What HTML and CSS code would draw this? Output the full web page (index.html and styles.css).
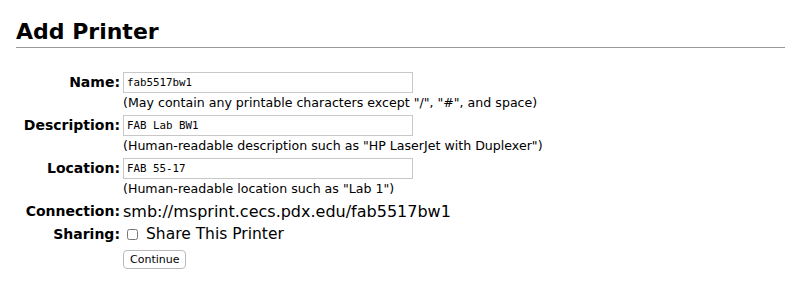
FILE: index.html
```html
<!DOCTYPE html>
<html lang="en">
<head>
    <meta charset="UTF-8">
    <link rel="stylesheet" href="styles.css">
    <title>Add Printer</title>
</head>
<body>
    <h2 class="title">Add Printer</h2>

    <form class="printer-form">
        <label class="label" for="name">Name:</label>
        <div class="field">
            <input type="text" id="name" class="text-input" value="fab5517bw1">
            <div class="help">(May contain any printable characters except "/", "#", and space)</div>
        </div>

        <label class="label" for="desc">Description:</label>
        <div class="field">
            <input type="text" id="desc" class="text-input" value="FAB Lab BW1">
            <div class="help">(Human-readable description such as "HP LaserJet with Duplexer")</div>
        </div>

        <label class="label" for="loc">Location:</label>
        <div class="field">
            <input type="text" id="loc" class="text-input" value="FAB 55-17">
            <div class="help">(Human-readable location such as "Lab 1")</div>
        </div>

        <div class="label">Connection:</div>
        <div class="value">smb://msprint.cecs.pdx.edu/fab5517bw1</div>

        <div class="label">Sharing:</div>
        <div class="value"><label class="share"><input type="checkbox" class="check"> Share This Printer</label></div>

        <div></div>
        <div class="actions"><button type="button" class="button">Continue</button></div>
    </form>
</body>
</html>
```

FILE: styles.css
```css
body {
    margin: 0;
    font-family: "DejaVu Sans", Verdana, sans-serif;
    color: #000;
    background: #fff;
}

.title {
    margin: 19px 0 0 16px;
    padding-bottom: 2px;
    font-size: 22px;
    font-weight: bold;
    line-height: 26px;
    border-bottom: 1px solid #999;
}

.printer-form {
    display: grid;
    grid-template-columns: 120px auto;
    column-gap: 3px;
    row-gap: 3px;
    margin-top: 24px;
}

.label {
    text-align: right;
    font-weight: bold;
    font-size: 14px;
    line-height: 19px;
    padding-top: 1px;
}

.field {
    display: flex;
    flex-direction: column;
    align-items: flex-start;
}

.text-input {
    width: 290px;
    height: 21px;
    box-sizing: border-box;
    margin: 0;
    padding: 0 3px;
    border: 1px solid #c8c8c8;
    font-family: "DejaVu Sans Mono", monospace;
    font-size: 10.8px;
}

.help {
    font-size: 12.6px;
    line-height: 19px;
}

.value {
    font-size: 16px;
    line-height: 19px;
    padding-top: 1px;
}

.share {
    display: flex;
    align-items: center;
    font-size: 15.5px;
    line-height: 19px;
}

.check {
    width: 11px;
    height: 11px;
    margin: 0 8px 0 4px;
}

.actions {
    display: flex;
    padding-top: 3px;
}

.button {
    font-family: "DejaVu Sans", sans-serif;
    font-size: 11px;
    height: 19px;
    padding: 0 6px;
    background: #fff;
    border: 1px solid #bbb;
    border-radius: 4px;
}
```
